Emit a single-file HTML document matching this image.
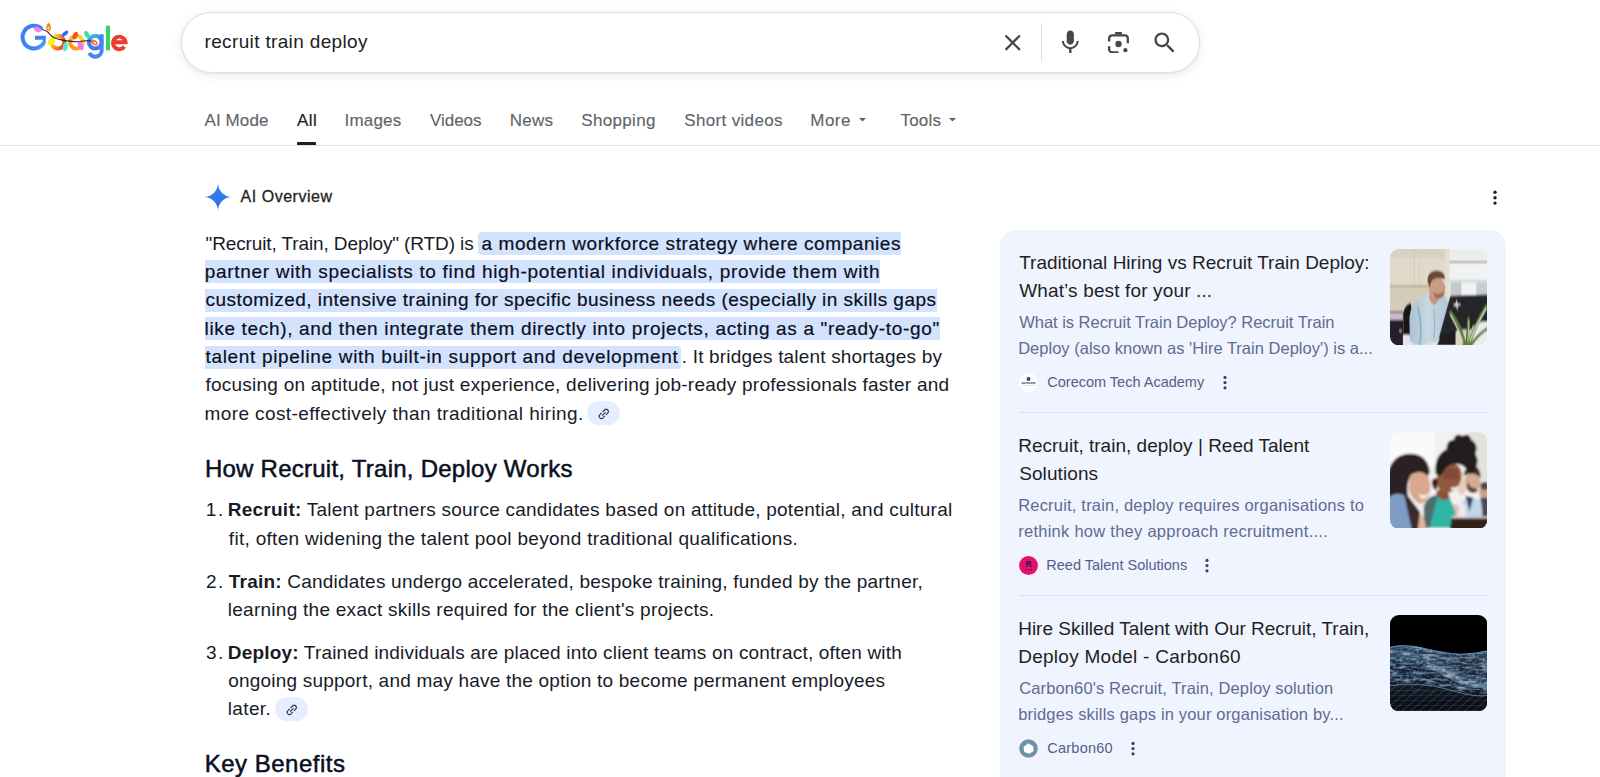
<!DOCTYPE html>
<html lang="en"><head><meta charset="utf-8"><title>recruit train deploy - Google Search</title>
<style>
html,body{margin:0;padding:0;background:#fff}
body{font-family:"Liberation Sans",sans-serif;width:1600px;height:777px;overflow:hidden}
#page{position:relative;width:1600px;height:777px;overflow:hidden;background:#fff}
.t{position:absolute;white-space:pre;font-weight:400}
.t b{font-weight:700}
.a{position:absolute}
.hl{position:absolute;background:#d3e3fd;height:23px}
svg{display:block}

</style></head>
<body>
<div id="page">
<svg class="a" style="left:0;top:0" width="140" height="70" viewBox="0 0 140 70" fill="none">
<defs>
<linearGradient id="o1" x1="0" y1="0.3" x2="1" y2="0.8"><stop offset="0" stop-color="#fdf01c"/><stop offset=".45" stop-color="#ff8a1c"/><stop offset="1" stop-color="#f5382c"/></linearGradient>
<linearGradient id="o2" x1="0" y1="1" x2="1" y2="0"><stop offset="0" stop-color="#ff8b1a"/><stop offset=".6" stop-color="#fdbf2a"/><stop offset="1" stop-color="#ffd84a"/></linearGradient>
<linearGradient id="gg" x1="0" y1="0" x2="0.3" y2="1"><stop offset="0" stop-color="#37c6f4"/><stop offset=".35" stop-color="#4285f4"/><stop offset="1" stop-color="#3b78f0"/></linearGradient>
<linearGradient id="G1" x1="0" y1="0" x2="1" y2="1"><stop offset="0" stop-color="#3f7cf2"/><stop offset=".8" stop-color="#4285f4"/><stop offset="1" stop-color="#5fd0f5"/></linearGradient>
<filter id="lb" x="-20%" y="-20%" width="140%" height="140%"><feGaussianBlur stdDeviation=".35"/></filter>
<clipPath id="gclip"><rect x="0" y="0" width="45.8" height="70"/></clipPath></defs>
<g filter="url(#lb)">
<!-- G -->
<path d="M42.1 29.1A11.4 11.4 0 1 0 45.4 37.8H35" stroke="url(#G1)" stroke-width="4" clip-path="url(#gclip)"/>
<!-- o o -->
<circle cx="57.8" cy="42.2" r="6.4" stroke="url(#o1)" stroke-width="4"/>
<circle cx="76.5" cy="42.2" r="6.4" stroke="url(#o2)" stroke-width="4"/>
<!-- g -->
<circle cx="95.2" cy="42.2" r="6.4" stroke="url(#gg)" stroke-width="4"/>
<path d="M101.7 34.2V50.2A6.5 6.5 0 0 1 89.3 52.9" stroke="#4285f4" stroke-width="3.9"/>
<!-- l -->
<path d="M108 25.6V50.4" stroke="#37d25c" stroke-width="4.1"/>
<!-- e -->
<path d="M113.6 42.3H125.6A6.3 6.3 0 1 0 124.4 46.7" stroke="#ef3b30" stroke-width="3.9"/>
<!-- wire -->
<path d="M41.5 29.5C45 30 48 31.5 50 34.5S58 39.500 65 40.600 74 42.200 80 41.500 89 39.500 93.500 42" stroke="#2b1838" stroke-width="1.1"/>
<!-- bulbs -->
<ellipse cx="37.6" cy="29.4" rx="4" ry="2.5" transform="rotate(25 37.600 29.400)" fill="#f781f2"/>
<path d="M48.6 22.600C50.800 25 51.800 27.500 50.600 30 49.800 31.500 47.400 31.500 46.600 30 45.400 27.500 46.400 25 48.600 22.600z" fill="#ff7d1f"/>
<ellipse cx="48.6" cy="28.300" rx="1.200" ry="2" fill="#ffd860"/>
<ellipse cx="65" cy="33.600" rx="1.900" ry="4" transform="rotate(48 65 33.600)" fill="#2d6cf3"/>
<ellipse cx="51.2" cy="42" rx="4" ry="3" transform="rotate(-20 51.200 42)" fill="#fff21f"/>
<ellipse cx="65.3" cy="46.800" rx="2.500" ry="4.400" transform="rotate(8 65.300 46.800)" fill="#45f0cd"/>
<ellipse cx="75.2" cy="35.600" rx="2.400" ry="4" transform="rotate(25 75.200 35.600)" fill="#ff4d1c"/>
<ellipse cx="80.7" cy="45.800" rx="2.400" ry="4.500" transform="rotate(-22 80.700 45.800)" fill="#f56ef2"/>
<ellipse cx="86.9" cy="34.500" rx="2.300" ry="4" transform="rotate(-30 86.900 34.500)" fill="#37e395"/>
<ellipse cx="94.3" cy="42.600" rx="3.600" ry="2.500" transform="rotate(30 94.300 42.600)" fill="#ff6d22"/>
<ellipse cx="94.8" cy="42.900" rx="1.500" ry="1" transform="rotate(30 94.800 42.900)" fill="#fff0e0"/>
</g>
</svg>

<!-- search box -->
<div class="a" style="left:181px;top:12px;width:1017px;height:59px;border:1px solid #dcdfe6;border-radius:31px;background:#fff;box-shadow:0 2px 10px 1px rgba(60,64,80,.09),0 1px 3px rgba(60,64,80,.05)"></div>
<!-- clear X -->
<svg class="a" style="left:999.3px;top:29.3px" width="27.4" height="27.4" viewBox="0 0 24 24"><path fill="#46474b" d="M19 6.41L17.59 5 12 10.59 6.41 5 5 6.41 10.59 12 5 17.59 6.41 19 12 13.41 17.59 19 19 17.59 13.41 12z"/></svg>
<div class="a" style="left:1041px;top:23px;width:1px;height:38px;background:#dadce0"></div>
<!-- mic -->
<svg class="a" style="left:1056.2px;top:28.3px" width="28.6" height="28.6" viewBox="0 0 24 24"><path fill="#46474b" d="M12 14c1.66 0 2.99-1.34 2.99-3L15 5c0-1.66-1.34-3-3-3S9 3.34 9 5v6c0 1.66 1.34 3 3 3zm5.3-3c0 3-2.54 5.1-5.3 5.1S6.7 14 6.7 11H5c0 3.410 2.720 6.230 6 6.720V21h2v-3.280c3.280-.48 6-3.300 6-6.720h-1.700z"/></svg>
<!-- lens -->
<svg class="a" style="left:1107.5px;top:31.7px" width="21" height="21.6" viewBox="0 0 21 21.6" fill="none" stroke="#46474b" stroke-width="2.3" stroke-linecap="butt">
<rect x="6.9" y="0" width="7.2" height="2.6" rx="1" fill="#46474b" stroke="none"/>
<path d="M1.15 9.6V6.3a3 3 0 0 1 3-3H16.8a3 3 0 0 1 3 3v4.9"/>
<path d="M1.15 14.2v3.2a3 3 0 0 0 3 3h6.3"/>
<circle cx="10.5" cy="12" r="3.2" fill="#46474b" stroke="none"/>
<circle cx="17.4" cy="18.2" r="2.1" fill="#46474b" stroke="none"/>
</svg>
<!-- search -->
<svg class="a" style="left:1150.6px;top:28.8px" width="27.4" height="27.4" viewBox="0 0 24 24"><path fill="#46474b" d="M15.5 14h-.79l-.28-.27C15.41 12.59 16 11.11 16 9.5 16 5.91 13.09 3 9.5 3S3 5.91 3 9.5 5.91 16 9.5 16c1.61 0 3.09-.59 4.23-1.57l.27.28v.79l5 4.99L20.49 19l-4.99-5zm-6 0C7.01 14 5 11.99 5 9.500S7.010 5 9.500 5 14 7.010 14 9.500 11.990 14 9.500 14z"/></svg>

<!-- tabs line + underline -->
<div class="a" style="left:0;top:145px;width:1600px;height:1px;background:#dfe1e5"></div>
<div class="a" style="left:297px;top:142px;width:19px;height:3px;background:#1f1f1f;border-radius:1px 1px 0 0"></div>
<svg class="a" style="left:859px;top:118.4px" width="7" height="3.5" viewBox="0 0 10 5"><path d="M0 0h10L5 5z" fill="#5f6368"/></svg>
<svg class="a" style="left:949.3px;top:118.4px" width="7" height="3.5" viewBox="0 0 10 5"><path d="M0 0h10L5 5z" fill="#5f6368"/></svg>

<!-- AI overview sparkle -->
<svg class="a" style="left:204.45px;top:182.7px" width="28" height="28" viewBox="0 0 24 24"><defs><linearGradient id="sg" x1="0" y1="1" x2="1" y2="0"><stop offset="0" stop-color="#2a70e6"/><stop offset="1" stop-color="#3a82ef"/></linearGradient></defs><path fill="url(#sg)" d="M12 0C12 6.63 17.37 12 24 12 17.37 12 12 17.37 12 24 12 17.37 6.63 12 0 12 6.63 12 12 6.63 12 0z"/></svg>
<!-- top-right menu dots -->
<svg class="a" style="left:1492px;top:189.8px" width="6" height="16" viewBox="0 0 6 16"><g fill="#1f1f1f"><circle cx="3" cy="2.3" r="1.7"/><circle cx="3" cy="7.7" r="1.7"/><circle cx="3" cy="13.1" r="1.7"/></g></svg>

<!-- highlights -->
<div class="hl" style="left:478px;top:232px;width:423px;border-radius:4px 0 0 4px"></div>
<div class="hl" style="left:204.5px;top:260.4px;width:675px"></div>
<div class="hl" style="left:204.5px;top:288.8px;width:732px"></div>
<div class="hl" style="left:204.5px;top:317.1px;width:735px"></div>
<div class="hl" style="left:204.5px;top:345.5px;width:476.7px;border-radius:0 4px 4px 0"></div>


<!-- right panel -->
<div class="a" style="left:1000px;top:230px;width:506px;height:560px;background:#f0f4fe;border-radius:16.5px"></div>
<div class="a" style="left:1019px;top:412px;width:468.5px;height:1px;background:#d3e3fd"></div>
<div class="a" style="left:1019px;top:595px;width:468.5px;height:1px;background:#d3e3fd"></div>

<!-- chips icons -->
<svg class="a" style="left:587.2px;top:401px" width="33" height="24" viewBox="0 0 33 24"><rect width="33" height="24" rx="12" fill="#e5edff"/><g transform="translate(16.8 12.9) rotate(-45)" fill="none" stroke="#2c3a4d" stroke-width="1.15" stroke-linecap="round"><path d="M-1.2 -2.2H-3.3a2.2 2.2 0 0 0 0 4.4H-1.2"/><path d="M1.2 -2.2H3.3a2.2 2.2 0 0 1 0 4.4H1.200"/><path d="M-1.900 0H1.900"/></g></svg>
<svg class="a" style="left:274.8px;top:697.4px" width="33" height="24" viewBox="0 0 33 24"><rect width="33" height="24" rx="12" fill="#e5edff"/><g transform="translate(16.8 12.9) rotate(-45)" fill="none" stroke="#2c3a4d" stroke-width="1.15" stroke-linecap="round"><path d="M-1.2 -2.2H-3.3a2.2 2.2 0 0 0 0 4.4H-1.2"/><path d="M1.2 -2.2H3.3a2.2 2.2 0 0 1 0 4.4H1.200"/><path d="M-1.900 0H1.900"/></g></svg>

<!-- card dots -->
<svg class="a" style="left:1221.9px;top:375px" width="6" height="16" viewBox="0 0 6 16"><g fill="#39426f"><circle cx="3" cy="2.400" r="1.600"/><circle cx="3" cy="7.600" r="1.600"/><circle cx="3" cy="12.800" r="1.600"/></g></svg>
<svg class="a" style="left:1203.9px;top:558px" width="6" height="16" viewBox="0 0 6 16"><g fill="#39426f"><circle cx="3" cy="2.400" r="1.600"/><circle cx="3" cy="7.600" r="1.600"/><circle cx="3" cy="12.800" r="1.600"/></g></svg>
<svg class="a" style="left:1129.6px;top:741px" width="6" height="16" viewBox="0 0 6 16"><g fill="#39426f"><circle cx="3" cy="2.400" r="1.600"/><circle cx="3" cy="7.600" r="1.600"/><circle cx="3" cy="12.800" r="1.600"/></g></svg>

<!-- favicons -->
<svg class="a" style="left:1018.6px;top:372.800px" width="19" height="19" viewBox="0 0 19 19"><circle cx="9.500" cy="9.500" r="9.400" fill="#fff"/><circle cx="9.500" cy="5.900" r="1.900" fill="#20243f"/><circle cx="9.300" cy="5.700" r=".7" fill="#8d93ad"/><text x="9.500" y="11.200" font-family="Liberation Sans, sans-serif" font-weight="700" font-size="4.100" text-anchor="middle" fill="#2a2f4d" textLength="14" lengthAdjust="spacingAndGlyphs">corecom</text><rect x="2.500" y="12.400" width="14" height=".6" fill="#c4c7d2" opacity=".8"/></svg>
<svg class="a" style="left:1018.6px;top:555.800px" width="19" height="19" viewBox="0 0 19 19"><circle cx="9.500" cy="9.500" r="9.400" fill="#e4126d"/><text x="9.600" y="11.300" font-family="Liberation Sans, sans-serif" font-weight="700" font-size="8.500" text-anchor="middle" fill="#23194a">R</text><g fill="#23194a"><circle cx="6.800" cy="13.700" r=".8"/><circle cx="9.500" cy="13.700" r=".8"/><circle cx="12.200" cy="13.700" r=".8"/></g></svg>
<svg class="a" style="left:1018.6px;top:738.900px" width="19" height="19" viewBox="0 0 19 19"><circle cx="9.500" cy="9.500" r="9.300" fill="#6d93a6"/><path d="M9.300 4.300L14.200 7.200 14.600 11.900 10.400 14.800 5.200 13 4.500 8z" fill="#fff"/></svg>

<!-- thumbnail 1 -->
<svg class="a" style="left:1390px;top:248.800px" width="97.3" height="96.3" viewBox="0 0 98 96.500" preserveAspectRatio="none">
<defs><clipPath id="c1"><rect width="98" height="96.500" rx="9"/></clipPath><filter id="b1"><feGaussianBlur stdDeviation="0.800"/></filter>
<linearGradient id="sh" x1="0" y1="0" x2="1" y2="0"><stop offset="0" stop-color="#a9c1d0"/><stop offset=".45" stop-color="#c6d9e3"/><stop offset="1" stop-color="#aec6d4"/></linearGradient></defs>
<g clip-path="url(#c1)"><g filter="url(#b1)">
<rect x="-5" y="-5" width="108" height="107" fill="#dad2c1"/>
<rect x="-5" y="8" width="62" height="28" fill="#e1dacb"/>
<rect x="-5" y="7.500" width="62" height=".8" fill="#cfc6b4"/>
<rect x="24" y="0" width=".8" height="36" fill="#cdc4b3"/>
<rect x="29" y="8" width=".8" height="28" fill="#d3cbba"/>
<rect x="-5" y="36.500" width="62" height="1.800" fill="#a99f8d"/>
<rect x="-5" y="38.300" width="62" height="30" fill="#d5ccba"/>
<rect x="55.500" y="-5" width="5" height="60" fill="#e2dfd6"/>
<rect x="60" y="-5" width="42" height="60" fill="#eceeec"/>
<rect x="60" y="12.300" width="42" height="1.700" fill="#8e9393"/>
<rect x="60" y="14" width="42" height="17" fill="#f1f3f2"/>
<rect x="60" y="31" width="42" height="2.500" fill="#d2d7da"/>
<rect x="61" y="33.500" width="11" height="13" fill="#c3cace"/>
<rect x="72" y="33.500" width="14" height="13" fill="#f0f2f3"/>
<rect x="87" y="33.500" width="14" height="13" fill="#c7cdd2"/>
<!-- left dark furniture -->
<rect x="-5" y="62.800" width="18.500" height="40" fill="#251b2b"/>
<rect x="-5" y="64" width="18" height="7" fill="#c9bdcc"/>
<circle cx="10.500" cy="82" r="1.700" fill="#8d8399"/>
<!-- chair -->
<path d="M13.500 64Q15 55 21 54L24 90H13.500z" fill="#141318"/>
<!-- papers -->
<rect x="13" y="86" width="40" height="12" fill="#e6e6e8"/>
<!-- shirt -->
<path d="M19.500 70Q21 52 34 47L40 44 54 46Q59 50 60 62L58 82 50 92 28 98 20 92z" fill="url(#sh)"/>
<path d="M39 48Q44 62 49 50L47 45H40z" fill="#c4957d"/>
<path d="M28 58Q33 78 30 96" stroke="#93afc0" stroke-width="1.800" fill="none"/>
<path d="M44 60Q46 76 44 90" stroke="#9cb6c6" stroke-width="1.200" fill="none"/>
<!-- head -->
<ellipse cx="47.500" cy="39.500" rx="8.300" ry="10.500" fill="#cb9c84"/>
<path d="M37.800 33Q37 22.500 46.500 21.600Q55 21.500 55.500 30L51 29.500Q44 28.500 41.500 33L40 38z" fill="#6b4935"/>
<path d="M43.500 43Q49 47.500 54.500 42L54 47Q49.500 52 45 48z" fill="#a06c56"/>
<!-- monitor -->
<path d="M60.800 46.800L100 45.500V80L70 81 49 90z" fill="#26272b"/>
<path d="M52 86L47 97H66L66 82z" fill="#1d1d21"/>
<path d="M67 50.500L68.300 54.500 72 55.500 68.500 57 68 61.500 66.500 57.500 63 56.200 66 54.500z" fill="#c9ccd2"/>
<!-- desk right -->
<path d="M83 78Q91 71 100 73V100H80z" fill="#ebebed"/>
<!-- plant -->
<g fill="none" stroke-linecap="round"><path d="M75 97Q73 80 61 64" stroke="#5c7f3e" stroke-width="3.400"/><path d="M77 97Q79 82 79 70" stroke="#4f7335" stroke-width="3"/><path d="M79 97Q85 78 97 58" stroke="#62873f" stroke-width="3.400"/><path d="M81 97Q88 86 99 79" stroke="#567a39" stroke-width="2.600"/><path d="M73.500 94Q70 82 61 66" stroke="#dbe6c6" stroke-width="1.100"/><path d="M80.500 92Q87 76 96.500 60" stroke="#dfe9ca" stroke-width="1.100"/><path d="M78.300 92Q79.500 80 79.500 72" stroke="#d5e1bf" stroke-width=".9"/></g>
</g></g></svg>

<!-- thumbnail 2 -->
<svg class="a" style="left:1390px;top:431.700px" width="97.3" height="96.8" viewBox="0 0 98 97" preserveAspectRatio="none">
<defs><clipPath id="c2"><rect width="98" height="97" rx="9"/></clipPath><filter id="b2"><feGaussianBlur stdDeviation="1.100"/></filter></defs>
<g clip-path="url(#c2)"><g filter="url(#b2)">
<rect x="-5" y="-5" width="108" height="107" fill="#f1f1ef"/>
<rect x="-5" y="-5" width="50" height="40" fill="#fafaf9"/>
<rect x="80" y="0" width="20" height="60" fill="#e4e2dd"/>
<!-- far right person -->
<ellipse cx="95" cy="60" rx="5" ry="8" fill="#c9a28c"/>
<ellipse cx="95.500" cy="54" rx="4.500" ry="4" fill="#5a4438"/>
<rect x="91" y="66" width="10" height="24" fill="#4a4a50"/>
<!-- man -->
<path d="M70 96L72 70Q80 62 92 70L94 96z" fill="#c5d6ea"/>
<path d="M76 64L80 80 84 66z" fill="#394a66"/>
<ellipse cx="83" cy="50" rx="8" ry="11" fill="#d3ab93"/>
<path d="M74 44Q75 34 84 34Q92 35 91 46Q86 40 78 42z" fill="#3a2c27"/>
<path d="M77 54Q80 64 88 60L87 56Q82 58 78 50z" fill="#5b4034"/>
<!-- pale woman behind -->
<ellipse cx="72" cy="54" rx="5" ry="9" fill="#e6cdbd"/>
<path d="M60 96L62 74Q70 66 76 76L76 96z" fill="#e8ecef"/>
<path d="M62 74Q66 70 70 76L66 92z" fill="#e9b9c4"/>
<!-- center woman -->
<path d="M34 96L36 70Q46 58 60 66L66 80 64 96z" fill="#2fb5a4"/>
<path d="M34 96L34 74Q40 62 48 64L44 80 40 96z" fill="#4f6a70"/>
<path d="M46 62Q52 72 60 66L58 58H48z" fill="#8b5239"/>
<ellipse cx="59.500" cy="46" rx="12" ry="15.500" transform="rotate(25 59.500 46)" fill="#93583c"/>
<path d="M52 40Q58 34 68 38L70 50Q64 44 54 48z" fill="#7a4630" opacity=".7"/>
<path d="M61 57Q65 61 69 56L67.500 54Q65 56.500 62 55z" fill="#f4ece6"/>
<path d="M46 42Q44 24 57 17Q57 8 64 8Q66 0 73 4Q80 0 82 8Q90 12 86 22Q91 30 85 38Q82 44 78 40Q76 33 68 32Q58 30 51 44z" fill="#211b1d"/>
<path d="M42 50Q44 45 48 47L47 58Q43 58 42 50z" fill="#2a1d1b"/>
<!-- left woman -->
<path d="M-2 40Q4 20 24 22Q38 24 40 40L36 50Q30 40 22 42Q16 50 18 64L30 80 28 98H-2z" fill="#2b2022"/>
<path d="M20 44Q30 36 38 44Q42 52 40 60Q38 72 30 72Q22 68 19 58z" fill="#dba88d"/>
<path d="M30 62Q35 66 39 61L38 64Q34 69 30 65z" fill="#fbf5f0"/>
<path d="M-2 66Q8 58 18 66L26 98H-2z" fill="#7f9cc4"/>
<path d="M14 62Q22 70 30 82L32 98H22z" fill="#3a2a2c"/>
<path d="M30 82Q36 86 36 98H28z" fill="#e2b59c"/>
<!-- table -->
<path d="M62 86L100 84V100H60z" fill="#33211d"/>
<rect x="62" y="84.500" width="40" height="2" fill="#d8d2cc"/>
</g></g></svg>

<!-- thumbnail 3 -->
<svg class="a" style="left:1390px;top:615px" width="97.3" height="96.3" viewBox="0 0 98 96.500" preserveAspectRatio="none">
<defs><clipPath id="c3"><rect width="98" height="96.500" rx="9"/></clipPath><filter id="b3"><feGaussianBlur stdDeviation="0.700"/></filter>
<linearGradient id="w1" x1="0" y1="0" x2="0" y2="1"><stop offset="0" stop-color="#27415c"/><stop offset=".45" stop-color="#15253a"/><stop offset="1" stop-color="#0b111b"/></linearGradient>
<filter id="mesh" x="0" y="0" width="100%" height="100%"><feTurbulence type="fractalNoise" baseFrequency="0.09 0.330" numOctaves="2" seed="7"/><feColorMatrix type="matrix" values="0 0 0 0 0.620  0 0 0 0 0.760  0 0 0 0 0.870  2.800 0 0 0 -1.200"/></filter>
<filter id="mesh2" x="0" y="0" width="100%" height="100%"><feTurbulence type="fractalNoise" baseFrequency="0.300 0.500" numOctaves="1" seed="3"/><feColorMatrix type="matrix" values="0 0 0 0 0.700  0 0 0 0 0.820  0 0 0 0 0.920  3.500 0 0 0 -1.700"/></filter>
<pattern id="grid" width="9" height="5" patternUnits="userSpaceOnUse" patternTransform="skewX(-50)"><path d="M0 0H9M0 0V5" stroke="#a9bccb" stroke-width=".6" opacity=".7" fill="none"/></pattern>
<clipPath id="wv"><path d="M-2 32Q14 28 30 32T62 38 100 35V100H-2z"/></clipPath>
</defs>
<g clip-path="url(#c3)"><g filter="url(#b3)">
<rect x="-5" y="-5" width="108" height="107" fill="#020306"/>
<path d="M-2 32Q14 28 30 32T62 38 100 35V100H-2z" fill="url(#w1)"/>
<path d="M-2 33Q14 29 30 33T62 39 100 36" stroke="#5b86a8" stroke-width="1.300" fill="none" opacity=".8"/>
<path d="M-2 38Q16 34 34 40T66 54 100 62V71Q80 73 62 61T28 47 -2 45z" fill="#3f6485" opacity=".45"/>
<path d="M36 46Q54 52 68 62T100 67V73Q82 75 66 67T38 52z" fill="#8fb0c6" opacity=".45"/>
<path d="M-2 50Q20 48 40 58T80 78 100 76V84H-2z" fill="#10203a" opacity=".7"/>
<g clip-path="url(#wv)"><rect x="0" y="28" width="98" height="50" filter="url(#mesh)" opacity=".55"/><rect x="0" y="30" width="98" height="50" filter="url(#mesh2)" opacity=".35"/></g>
<path d="M-2 62Q20 58 40 66T100 72" stroke="#5a86a8" stroke-width="1" fill="none" opacity=".6"/>
<path d="M-2 70Q30 65 60 74T100 79V100H-2z" fill="#0a1019" opacity=".85"/>
<path d="M-2 70Q30 65 60 74T100 79V100H-2z" fill="url(#grid)"/>
<path d="M-2 71Q30 66 60 75T100 80" stroke="#86a8c2" stroke-width=".9" fill="none" opacity=".7"/>
</g></g></svg>

<div class="t" style="left:204.50px;top:32px;font-size:19px;line-height:19px;letter-spacing:0.353px;color:#202124">recruit train deploy</div>
<div class="t" style="left:204.50px;top:112px;font-size:17px;line-height:17px;letter-spacing:0.107px;color:#5f6368;-webkit-text-stroke:0.12px #5f6368">AI Mode</div>
<div class="t" style="left:297.00px;top:112px;font-size:17px;line-height:17px;letter-spacing:0.435px;color:#1f1f1f;-webkit-text-stroke:0.2px #1f1f1f">All</div>
<div class="t" style="left:344.50px;top:112px;font-size:17px;line-height:17px;letter-spacing:0.200px;color:#5f6368;-webkit-text-stroke:0.12px #5f6368">Images</div>
<div class="t" style="left:430.00px;top:112px;font-size:17px;line-height:17px;letter-spacing:-0.037px;color:#5f6368;-webkit-text-stroke:0.12px #5f6368">Videos</div>
<div class="t" style="left:509.75px;top:112px;font-size:17px;line-height:17px;letter-spacing:0.245px;color:#5f6368;-webkit-text-stroke:0.12px #5f6368">News</div>
<div class="t" style="left:581.25px;top:112px;font-size:17px;line-height:17px;letter-spacing:0.337px;color:#5f6368;-webkit-text-stroke:0.12px #5f6368">Shopping</div>
<div class="t" style="left:684.25px;top:112px;font-size:17px;line-height:17px;letter-spacing:0.341px;color:#5f6368;-webkit-text-stroke:0.12px #5f6368">Short videos</div>
<div class="t" style="left:810.25px;top:112px;font-size:17px;line-height:17px;letter-spacing:0.490px;color:#5f6368;-webkit-text-stroke:0.12px #5f6368">More</div>
<div class="t" style="left:900.50px;top:112px;font-size:17px;line-height:17px;letter-spacing:0.203px;color:#5f6368;-webkit-text-stroke:0.12px #5f6368">Tools</div>
<div class="t" style="left:240.50px;top:189px;font-size:16px;line-height:16px;letter-spacing:0.530px;color:#1f1f1f;-webkit-text-stroke:0.3px #1f1f1f">AI Overview</div>
<div class="t" style="left:205.50px;top:234px;font-size:19px;line-height:19px;letter-spacing:-0.113px;color:#171b29">"Recruit, Train, Deploy" (RTD) is</div>
<div class="t" style="left:481.60px;top:234px;font-size:19px;line-height:19px;letter-spacing:0.570px;color:#0a0f1f;-webkit-text-stroke:0.2px #0a0f1f">a modern workforce strategy where companies</div>
<div class="t" style="left:204.80px;top:262px;font-size:19px;line-height:19px;letter-spacing:0.685px;color:#0a0f1f;-webkit-text-stroke:0.2px #0a0f1f">partner with specialists to find high-potential individuals, provide them with</div>
<div class="t" style="left:205.50px;top:290px;font-size:19px;line-height:19px;letter-spacing:0.474px;color:#0a0f1f;-webkit-text-stroke:0.2px #0a0f1f">customized, intensive training for specific business needs (especially in skills gaps</div>
<div class="t" style="left:204.50px;top:319px;font-size:19px;line-height:19px;letter-spacing:0.665px;color:#0a0f1f;-webkit-text-stroke:0.2px #0a0f1f">like tech), and then integrate them directly into projects, acting as a "ready-to-go"</div>
<div class="t" style="left:205.50px;top:347px;font-size:19px;line-height:19px;letter-spacing:0.673px;color:#0a0f1f;-webkit-text-stroke:0.2px #0a0f1f">talent pipeline with built-in support and development</div>
<div class="t" style="left:681.80px;top:347px;font-size:19px;line-height:19px;letter-spacing:0.182px;color:#171b29">. It bridges talent shortages by</div>
<div class="t" style="left:205.50px;top:375px;font-size:19px;line-height:19px;letter-spacing:0.231px;color:#171b29">focusing on aptitude, not just experience, delivering job-ready professionals faster and</div>
<div class="t" style="left:204.50px;top:404px;font-size:19px;line-height:19px;letter-spacing:0.399px;color:#171b29">more cost-effectively than traditional hiring.</div>
<div class="t" style="left:204.90px;top:457px;font-size:24px;line-height:24px;letter-spacing:0.253px;color:#0a0f1f;-webkit-text-stroke:0.5px #0a0f1f">How Recruit, Train, Deploy Works</div>
<div class="t" style="left:205.80px;top:500px;font-size:19px;line-height:19px;letter-spacing:1.619px;color:#171b29">1.</div>
<div class="t" style="left:227.80px;top:500px;font-size:19px;line-height:19px;letter-spacing:0.241px;color:#171b29"><b>Recruit:</b> Talent partners source candidates based on attitude, potential, and cultural</div>
<div class="t" style="left:228.80px;top:529px;font-size:19px;line-height:19px;letter-spacing:0.301px;color:#171b29">fit, often widening the talent pool beyond traditional qualifications.</div>
<div class="t" style="left:206.00px;top:572px;font-size:19px;line-height:19px;letter-spacing:1.419px;color:#171b29">2.</div>
<div class="t" style="left:228.80px;top:572px;font-size:19px;line-height:19px;letter-spacing:0.216px;color:#171b29"><b>Train:</b> Candidates undergo accelerated, bespoke training, funded by the partner,</div>
<div class="t" style="left:227.80px;top:600px;font-size:19px;line-height:19px;letter-spacing:0.263px;color:#171b29">learning the exact skills required for the client's projects.</div>
<div class="t" style="left:206.00px;top:643px;font-size:19px;line-height:19px;letter-spacing:1.419px;color:#171b29">3.</div>
<div class="t" style="left:227.80px;top:643px;font-size:19px;line-height:19px;letter-spacing:0.176px;color:#171b29"><b>Deploy:</b> Trained individuals are placed into client teams on contract, often with</div>
<div class="t" style="left:228.20px;top:671px;font-size:19px;line-height:19px;letter-spacing:0.212px;color:#171b29">ongoing support, and may have the option to become permanent employees</div>
<div class="t" style="left:227.80px;top:699px;font-size:19px;line-height:19px;letter-spacing:0.355px;color:#171b29">later.</div>
<div class="t" style="left:204.70px;top:752px;font-size:24px;line-height:24px;letter-spacing:0.505px;color:#0a0f1f;-webkit-text-stroke:0.5px #0a0f1f">Key Benefits</div>
<div class="t" style="left:1019.20px;top:253px;font-size:19px;line-height:19px;letter-spacing:0.014px;color:#1f1f1f">Traditional Hiring vs Recruit Train Deploy:</div>
<div class="t" style="left:1019.20px;top:281px;font-size:19px;line-height:19px;letter-spacing:0.141px;color:#1f1f1f">What’s best for your ...</div>
<div class="t" style="left:1019.20px;top:314px;font-size:16.5px;line-height:16.5px;letter-spacing:-0.024px;color:#5f6b92">What is Recruit Train Deploy? Recruit Train</div>
<div class="t" style="left:1018.20px;top:340px;font-size:16.5px;line-height:16.5px;letter-spacing:0.015px;color:#5f6b92">Deploy (also known as 'Hire Train Deploy') is a...</div>
<div class="t" style="left:1047.30px;top:375px;font-size:14.5px;line-height:14.5px;letter-spacing:-0.002px;color:#535e88">Corecom Tech Academy</div>
<div class="t" style="left:1018.20px;top:436px;font-size:19px;line-height:19px;letter-spacing:0.008px;color:#1f1f1f">Recruit, train, deploy | Reed Talent</div>
<div class="t" style="left:1019.20px;top:464px;font-size:19px;line-height:19px;letter-spacing:0.091px;color:#1f1f1f">Solutions</div>
<div class="t" style="left:1018.20px;top:497px;font-size:16.5px;line-height:16.5px;letter-spacing:0.193px;color:#5f6b92">Recruit, train, deploy requires organisations to</div>
<div class="t" style="left:1018.20px;top:523px;font-size:16.5px;line-height:16.5px;letter-spacing:0.265px;color:#5f6b92">rethink how they approach recruitment....</div>
<div class="t" style="left:1046.30px;top:558px;font-size:14.5px;line-height:14.5px;letter-spacing:0.002px;color:#535e88">Reed Talent Solutions</div>
<div class="t" style="left:1018.20px;top:619px;font-size:19px;line-height:19px;letter-spacing:-0.005px;color:#1f1f1f">Hire Skilled Talent with Our Recruit, Train,</div>
<div class="t" style="left:1018.20px;top:647px;font-size:19px;line-height:19px;letter-spacing:0.266px;color:#1f1f1f">Deploy Model - Carbon60</div>
<div class="t" style="left:1019.20px;top:680px;font-size:16.5px;line-height:16.5px;letter-spacing:0.132px;color:#5f6b92">Carbon60's Recruit, Train, Deploy solution</div>
<div class="t" style="left:1018.20px;top:706px;font-size:16.5px;line-height:16.5px;letter-spacing:0.165px;color:#5f6b92">bridges skills gaps in your organisation by...</div>
<div class="t" style="left:1047.30px;top:741px;font-size:14.5px;line-height:14.5px;letter-spacing:0.225px;color:#535e88">Carbon60</div>
</div>
</body></html>
